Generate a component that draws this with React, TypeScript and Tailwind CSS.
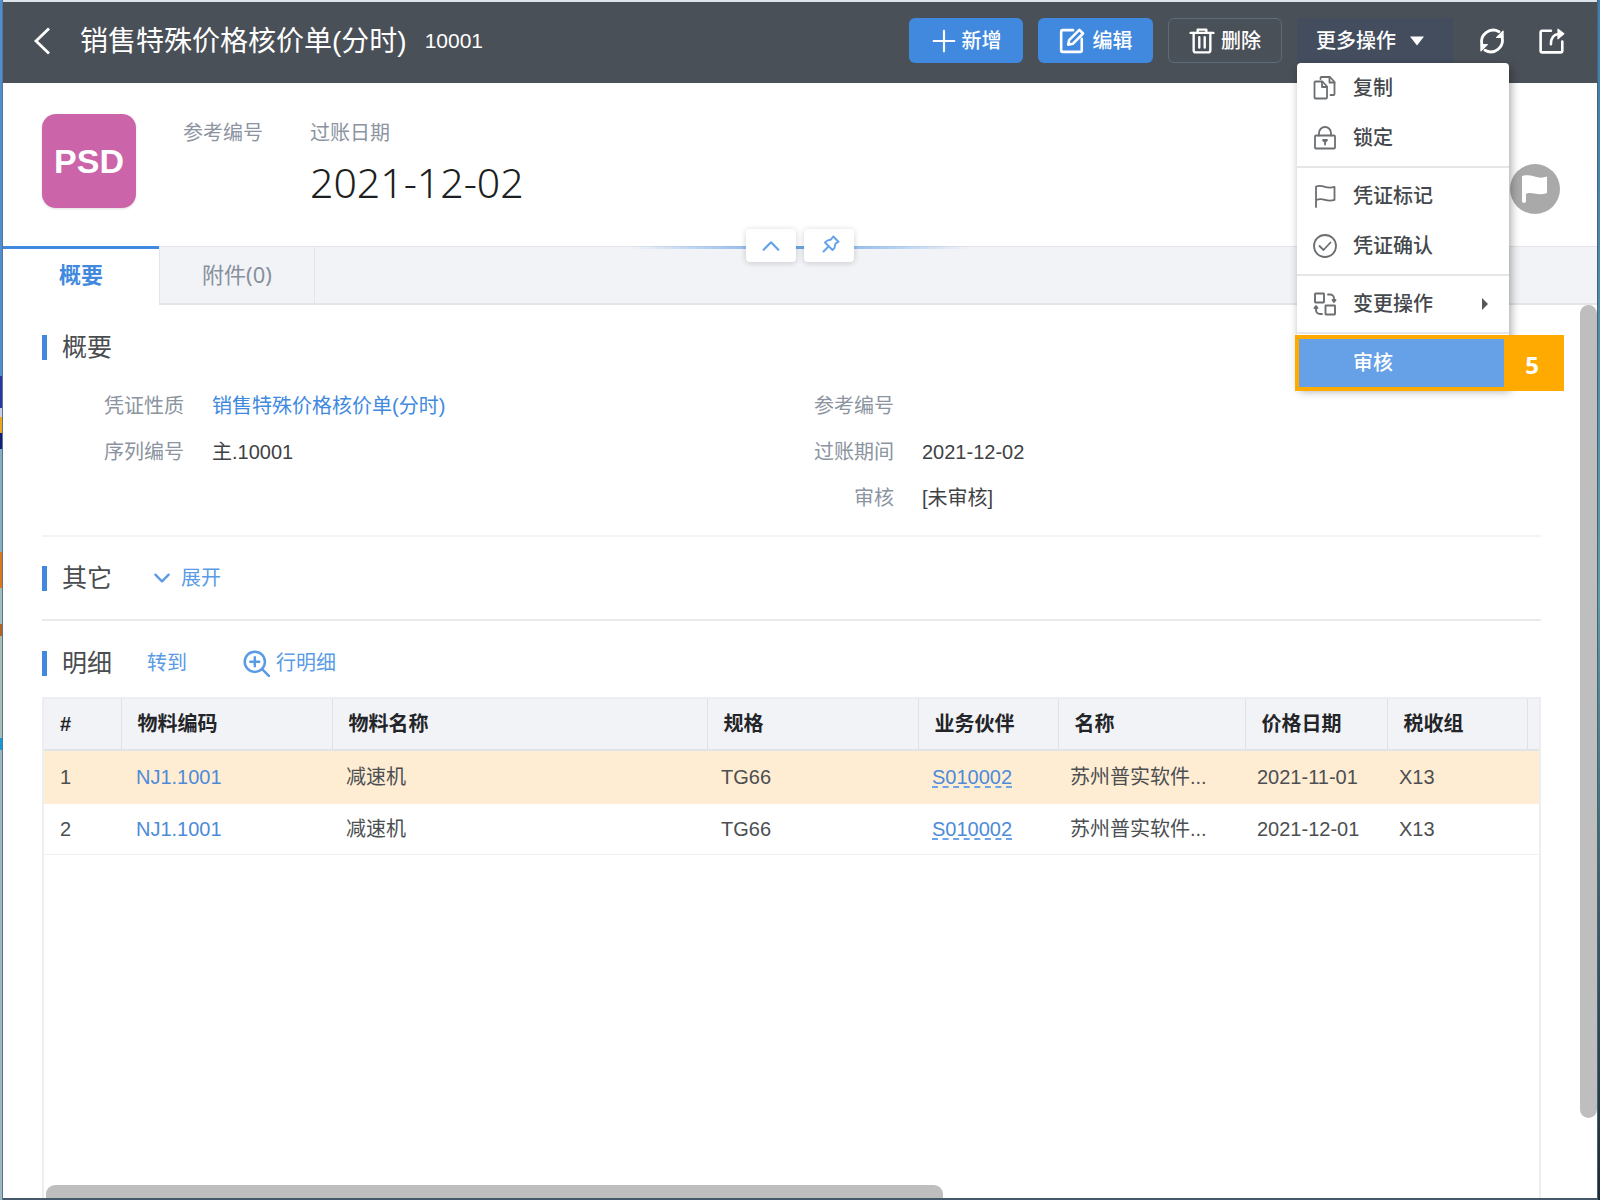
import type { ReactNode } from "react";

type IconProps = { className?: string; children: ReactNode; width?: number };

function Icon({ className = "size-6", children, width = 2 }: IconProps) {
  return (
    <svg
      viewBox="0 0 24 24"
      fill="none"
      stroke="currentColor"
      strokeWidth={width}
      strokeLinecap="round"
      strokeLinejoin="round"
      aria-hidden="true"
      className={`shrink-0 ${className}`}
    >
      {children}
    </svg>
  );
}

const CopyIcon = () => (
  <Icon width={1.8}>
    <path d="M2.500 5.500h7l4.500 5v11a1 1 0 0 1-1 1H2.500a1 1 0 0 1-1-1v-15a1 1 0 0 1 1-1Z" />
    <path d="M9 6v5h5" />
    <path d="M7.500 3V2a1 1 0 0 1 1-1H17l4.500 5v12a1 1 0 0 1-1 1h-3" />
    <path d="M16.500 1.500v5h5" />
  </Icon>
);

const LockIcon = () => (
  <Icon width={1.8}>
    <rect x="2" y="9.500" width="20" height="13" rx="1" />
    <path d="M6 9.500V7a6 6 0 0 1 12 0v2.500" />
    <path d="M10 14h4l-2 2zM12 14.500v4" />
  </Icon>
);

const FlagIcon = () => (
  <Icon width={1.8}>
    <path d="M3 23V2.500c3-1 5.500-.8 9 .4 3.500 1.100 6 1.100 9.500 0v13c-3.500 1.200-6 1.100-9.500 0-3.500-1.100-6-1.200-9 .4" />
  </Icon>
);

const CheckCircleIcon = () => (
  <Icon width={1.8}>
    <circle cx="12" cy="12" r="11" />
    <path d="m6.500 12 4 4 7-7.500" />
  </Icon>
);

const SwapIcon = () => (
  <Icon width={1.9}>
    <rect x="2" y="1.500" width="9" height="9" rx="0.500" />
    <rect x="12.500" y="13.500" width="9.500" height="9" rx="0.500" />
    <path d="M15 2.500h2a4 4 0 0 1 4 4V9M19.500 8h3L21 10z" />
    <path d="M9 22H7a4 4 0 0 1-4-4v-3M1.500 16h3L3 14z" />
  </Icon>
);

const bodyFont = "font-['Liberation_Sans','Noto_Sans_CJK_SC',sans-serif]";
const uiFont = "font-['Noto_Sans','Noto_Sans_CJK_SC',sans-serif]";

function MenuItem({ icon, label, more }: { icon: ReactNode; label: string; more?: boolean }) {
  return (
    <button
      type="button"
      role="menuitem"
      className="flex h-[50px] w-full items-center gap-4 pl-4 pr-5 text-left text-xl text-[#44484c]"
    >
      <span className="text-[#6c6f72]">{icon}</span>
      <span className="flex-1">{label}</span>
      {more && (
        <svg viewBox="0 0 8 12" className="h-3 w-2" aria-hidden="true">
          <path d="M1 0l6 6-6 6z" fill="#55585b" />
        </svg>
      )}
    </button>
  );
}

const MenuLine = () => <div role="separator" className="my-[3px] h-[2px] bg-[#e6e6e6]" />;

function MoreMenu() {
  return (
    <div
      role="menu"
      className="absolute left-0 top-full z-20 w-[212px] rounded-sm bg-white shadow-[2px_4px_10px_rgba(0,0,0,0.35)]"
    >
      <MenuItem icon={<CopyIcon />} label="复制" />
      <MenuItem icon={<LockIcon />} label="锁定" />
      <MenuLine />
      <MenuItem icon={<FlagIcon />} label="凭证标记" />
      <MenuItem icon={<CheckCircleIcon />} label="凭证确认" />
      <MenuLine />
      <MenuItem icon={<SwapIcon />} label="变更操作" more />
      <MenuLine />
      <div className="h-[50px]">
        <div className="absolute -left-[2px] -bottom-1 flex h-14 w-[269px] border-4 border-[#ffaa00] bg-[#ffaa00]">
          <button
            type="button"
            role="menuitem"
            className="w-[205px] bg-[#66a0e6] pl-[54px] text-left text-xl text-white"
          >
            审核
          </button>
          <span className={`flex flex-1 items-center justify-center pt-1 text-2xl font-bold text-white ${uiFont}`}>
            5
          </span>
        </div>
      </div>
    </div>
  );
}

function Header() {
  return (
    <header className="flex h-[81px] shrink-0 items-start bg-[#4a5057] pl-[30px] pr-8 pt-4 text-white">
      <button type="button" aria-label="返回" className="flex h-[45px] items-center">
        <svg viewBox="0 0 18 28" fill="none" stroke="currentColor" strokeWidth="2.800" className="h-7 w-[18px]">
          <path d="M16 1.500 3 14l13 12.500" />
        </svg>
      </button>
      <h1 className="ml-[29px] flex h-12 items-center text-[28px]">销售特殊价格核价单(分时)</h1>
      <span className="ml-[18px] flex h-[45px] items-center text-[21px]">10001</span>
      <div className="ml-auto flex items-center gap-[15px] text-xl font-medium">
        <button
          type="button"
          className="flex h-[45px] w-[114px] items-center justify-center gap-[5px] rounded-md bg-[#4089de]"
        >
          <Icon className="size-[26px]" width={2}>
            <path d="M12 2.500v19M2.500 12h19" />
          </Icon>
          新增
        </button>
        <button
          type="button"
          className="flex h-[45px] w-[115px] items-center justify-center gap-2 rounded-md bg-[#4089de]"
        >
          <Icon className="size-[26px]" width={2.4}>
            <path d="M13 2H3.500A1.500 1.500 0 0 0 2 3.500v17A1.500 1.500 0 0 0 3.500 22h16a1.500 1.500 0 0 0 1.500-1.500V10" />
            <path d="M8.500 15.500l.8-4.300 9.500-9.500 3.400 3.400-9.500 9.500z" />
          </Icon>
          编辑
        </button>
        <button
          type="button"
          className="flex h-[45px] w-[114px] items-center justify-center gap-[6px] rounded-md border border-[#5d6b7a]"
        >
          <Icon className="size-[26px]" width={2.200}>
            <path d="M1.500 4.500h21M8 4V1.500h8V4" />
            <path d="M4.300 4.500v16a2 2 0 0 0 2 2h11.400a2 2 0 0 0 2-2v-16M9.500 8.500v9.500M14.500 8.500v9.500" />
          </Icon>
          删除
        </button>
        <div className="relative">
          <button
            type="button"
            aria-haspopup="menu"
            aria-expanded="true"
            className="flex h-[45px] w-[156px] items-center gap-[14px] bg-[#434d5e] pl-[19px]"
          >
            更多操作
            <svg viewBox="0 0 14 10" className="h-[10px] w-[14px]" aria-hidden="true">
              <path d="M0 .5h14L7 9.500z" fill="currentColor" />
            </svg>
          </button>
          <MoreMenu />
        </div>
      </div>
      <button type="button" aria-label="刷新" className="ml-[25px] flex h-[45px] items-center">
        <Icon className="size-7" width={2.400}>
          <path d="M20.500 8.500A10 10 0 0 1 6 20M3.500 15.500A10 10 0 0 1 18 4" />
          <path d="M21.500 3.500v5.500h-5.500z" fill="currentColor" strokeWidth={1} />
          <path d="M2.500 20.500V15H8z" fill="currentColor" strokeWidth={1} />
        </Icon>
      </button>
      <button type="button" aria-label="打开新窗口" className="ml-[33px] flex h-[45px] items-center">
        <Icon className="size-[26px]" width={2.400}>
          <path d="M11 2.500H3A1.500 1.500 0 0 0 1.500 4v17A1.500 1.500 0 0 0 3 22.500h17a1.500 1.500 0 0 0 1.500-1.500v-8.500" />
          <path d="M11 15c0-5.500 2.500-9 7-9.500" />
          <path d="M17.500 1l5.500 4.300-5.500 4.700z" fill="currentColor" strokeWidth={1} />
        </Icon>
      </button>
    </header>
  );
}

function Summary() {
  return (
    <section className="flex h-[163px] shrink-0 items-start bg-white pl-[39px] pr-[37px] pt-[31px]">
      <div className="flex size-[94px] items-center justify-center rounded-[14px] bg-[#cb64a8] text-[34px] font-bold text-white shadow-sm">
        PSD
      </div>
      <dl className="ml-[47px] flex gap-[47px]">
        <div>
          <dt className="pt-[5px] text-xl text-[#8b94a0]">参考编号</dt>
        </div>
        <div>
          <dt className="pt-[5px] text-xl text-[#8b94a0]">过账日期</dt>
          <dd className={`mt-[6px] text-[41px] leading-[58px] font-light text-[#1c1e20] ${uiFont}`}>2021-12-02</dd>
        </div>
      </dl>
      <button
        type="button"
        aria-label="凭证标记"
        className="ml-auto mt-[50px] flex size-[50px] items-center justify-center rounded-full bg-[#a9a9a9]"
      >
        <svg viewBox="0 0 26 28" className="h-7 w-[26px]" aria-hidden="true">
          <path d="M0 1C4 0 8 0 12.500 1.500S21 3 25 1.500v16.500c-4 1.500-8 1.500-12.500.5S6 18 4 18.800V26a2 2 0 0 1-4 0z" fill="#fff" />
        </svg>
      </button>
    </section>
  );
}

function Tabs() {
  return (
    <div role="tablist" className="relative flex h-[59px] shrink-0 bg-[#f2f3f7] text-[22px]">
      <button
        type="button"
        role="tab"
        aria-selected="true"
        className={`w-[156px] border-t-[3px] border-[#4089de] bg-white pb-[5px] font-bold text-[#4089de] ${uiFont}`}
      >
        概要
      </button>
      <button
        type="button"
        role="tab"
        aria-selected="false"
        className={`w-[156px] border border-b-2 border-[#e3e5e9] pb-[2px] text-[#87909b] ${uiFont}`}
      >
        附件(0)
      </button>
      <div className="flex-1 border-b-2 border-t border-[#e3e5e9]" />
      <div className="absolute inset-x-0 -top-[17px] flex justify-center gap-2">
        <div className="absolute top-[17px] h-[3px] w-[340px] bg-linear-to-r from-transparent via-[#6ba5e8] to-transparent" />
        <button
          type="button"
          aria-label="收起"
          className="relative flex h-[33px] w-[50px] items-center justify-center rounded-sm bg-white text-[#64a2ea] shadow-[0_1px_6px_rgba(0,0,0,0.18)]"
        >
          <Icon className="size-[22px]" width={2.400}>
            <path d="m4 16 8-8 8 8" />
          </Icon>
        </button>
        <button
          type="button"
          aria-label="固定"
          className="relative flex h-[33px] w-[50px] items-center justify-center rounded-sm bg-white pl-1 pb-1 text-[#64a2ea] shadow-[0_1px_6px_rgba(0,0,0,0.18)]"
        >
          <Icon className="size-[18px]" width={2.600}>
            <path d="M15 2 22 9l-4 2.500-1.500 6L14 20 4 10l3-2.500 5-1.500zM9 15l-7 7" />
          </Icon>
        </button>
      </div>
    </div>
  );
}

function SectionTitle({ children, extra }: { children: ReactNode; extra?: ReactNode }) {
  return (
    <div className="flex h-9 items-center">
      <span className="h-[25px] w-[5px] bg-[#4089de]" />
      <h2 className="ml-[15px] text-[25px] leading-9 text-[#4a4d50]">{children}</h2>
      {extra}
    </div>
  );
}

function Field({ label, children }: { label: string; children?: ReactNode }) {
  return (
    <div className="flex h-[46px] items-center gap-7">
      <dt className="w-[142px] text-right text-[#8b94a0]">{label}</dt>
      <dd className="text-[#3f4245]">{children}</dd>
    </div>
  );
}

const columns = ["#", "物料编码", "物料名称", "规格", "业务伙伴", "名称", "价格日期", "税收组", ""];
const rows = [
  { no: "1", code: "NJ1.1001", name: "减速机", spec: "TG66", partner: "S010002", company: "苏州普实软件...", date: "2021-11-01", tax: "X13" },
  { no: "2", code: "NJ1.1001", name: "减速机", spec: "TG66", partner: "S010002", company: "苏州普实软件...", date: "2021-12-01", tax: "X13" },
];

function DetailTable() {
  return (
    <div className="flex min-h-0 flex-1 flex-col border-x-2 border-t-2 border-[#eceef2]">
      <table className="w-full table-fixed border-collapse text-left text-xl">
        <colgroup>
          <col className="w-[77px]" />
          <col className="w-[211px]" />
          <col className="w-[375px]" />
          <col className="w-[211px]" />
          <col className="w-[140px]" />
          <col className="w-[187px]" />
          <col className="w-[142px]" />
          <col className="w-[140px]" />
          <col className="w-[12px]" />
        </colgroup>
        <thead>
          <tr className="h-[51px] border-b-2 border-[#e0e3e9] bg-[#f2f3f7]">
            {columns.map((c) => (
              <th
                key={c}
                scope="col"
                className="border-r border-[#dfe2e8] pl-4 font-bold text-[#232528] last:border-r-0 last:pl-0"
              >
                {c}
              </th>
            ))}
          </tr>
        </thead>
        <tbody className="text-[#4c4f52]">
          {rows.map((r) => (
            <tr
              key={r.no}
              className="h-[51px] border-b border-[#f2f2f4] first:h-[53px] first:border-[#ffedd3] first:bg-[#ffedd3]"
            >
              <td className="pl-4">{r.no}</td>
              <td className="pl-[15px]">
                <a href="#item" className="text-[#4d8bd8]">{r.code}</a>
              </td>
              <td className="pl-[14px]">{r.name}</td>
              <td className="pl-[14px]">{r.spec}</td>
              <td className="pl-[14px]">
                <a
                  href="#partner"
                  className="text-[#4d8bd8] underline decoration-[#6ba3e6] decoration-dashed decoration-2 underline-offset-[3px]"
                >
                  {r.partner}
                </a>
              </td>
              <td className="whitespace-nowrap pl-3">{r.company}</td>
              <td className="whitespace-nowrap pl-3">{r.date}</td>
              <td className="pl-3">{r.tax}</td>
              <td />
            </tr>
          ))}
        </tbody>
      </table>
      <div className="mt-auto ml-[2px] h-[13px] w-[60%] rounded-t-[9px] bg-[#bebebe]" />
    </div>
  );
}

function Content() {
  return (
    <main className="flex min-h-0 flex-1 bg-white">
      <div className="flex min-w-0 flex-1 flex-col pl-[39px] pr-[39px] pt-6">
        <SectionTitle>概要</SectionTitle>
        <div className="mt-[18px] flex h-[152px] text-xl">
          <dl className="w-[710px] shrink-0">
            <Field label="凭证性质">
              <a href="#voucher" className="text-[#4089de]">销售特殊价格核价单(分时)</a>
            </Field>
            <Field label="序列编号">主.10001</Field>
          </dl>
          <dl>
            <Field label="参考编号" />
            <Field label="过账期间">2021-12-02</Field>
            <Field label="审核">[未审核]</Field>
          </dl>
        </div>
        <hr className="h-[2px] border-0 bg-[#f4f4f5]" />
        <div className="py-[23px]">
          <SectionTitle
            extra={
              <button type="button" className="ml-10 flex items-center gap-[9px] text-xl text-[#5a9be6]">
                <Icon className="size-[20px]" width={2.800}>
                  <path d="m4 8 8 8 8-8" />
                </Icon>
                展开
              </button>
            }
          >
            其它
          </SectionTitle>
        </div>
        <hr className="h-[2px] border-0 bg-[#e9eaec]" />
        <div className="pb-4 pt-6">
          <SectionTitle
            extra={
              <>
                <button type="button" className="ml-[35px] text-xl text-[#5a9be6]">转到</button>
                <button type="button" className="ml-14 flex items-center gap-[6px] text-xl text-[#5a9be6]">
                  <Icon className="size-[27px]" width={2.200}>
                    <circle cx="10.500" cy="10.500" r="9" />
                    <path d="m17 17 6 6M6.500 10.500h8M10.500 6.500v8" />
                  </Icon>
                  行明细
                </button>
              </>
            }
          >
            明细
          </SectionTitle>
        </div>
        <DetailTable />
      </div>
      <div className="w-[17px]">
        <div className="h-[91%] rounded-full bg-[#bebebe]" />
      </div>
    </main>
  );
}

function LeftEdge() {
  return (
    <div className="flex w-[3px] shrink-0 flex-col border-r border-[#5b7590] bg-[#9fb8bd]">
      <div className="h-[376px] bg-[#4d90d0]" />
      <div className="h-8 bg-[#2637a0]" />
      <div className="h-[9px] bg-[#c9cfe6]" />
      <div className="h-4 bg-[#f0a51c]" />
      <div className="h-4 bg-[#101f78]" />
      <div className="h-[103px] bg-[#86b0c2]" />
      <div className="h-9 bg-[#e0761c]" />
      <div className="h-9 bg-[#a3bdb9]" />
      <div className="h-3 bg-[#b0641c]" />
      <div className="h-[102px] bg-[#a9bfb5]" />
      <div className="h-3 bg-[#149ad6]" />
    </div>
  );
}

export default function App() {
  return (
    <div className={`flex h-screen bg-white ${bodyFont}`}>
      <LeftEdge />
      <div className="flex min-w-0 flex-1 flex-col border-b-2 border-t-2 border-b-[#46586b] border-t-[#dfe4ea]">
        <Header />
        <Summary />
        <Tabs />
        <Content />
      </div>
      <div className="w-[3px] shrink-0 border-l border-[#4a6076] bg-linear-to-b from-[#3d7fae] via-[#5f9aa6] to-[#1d2a33]" />
    </div>
  );
}
